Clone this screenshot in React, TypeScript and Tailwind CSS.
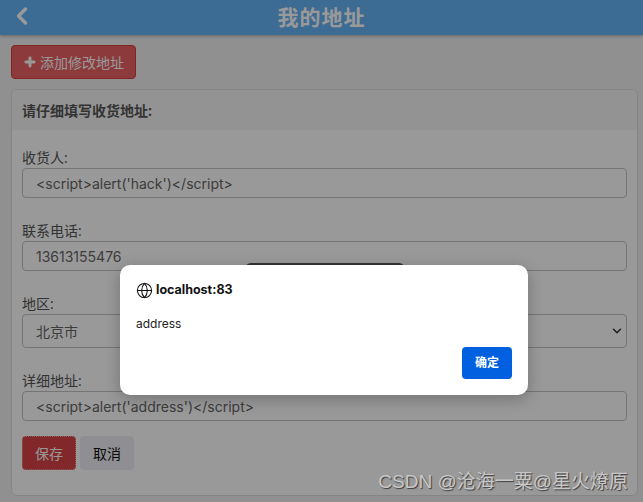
import React from 'react';
import { ChevronLeft, ChevronDown, Plus, Globe } from 'lucide-react';

const FONT = '"Open Sans", "Noto Sans CJK SC", sans-serif';

const Field = ({ label, value }: { label: string; value: string }) => (
    <div className="flex flex-col">
        <label className="text-[14px] leading-[20px] text-[#555]">{label}</label>
        <input
            readOnly
            value={value}
            className="h-[30px] rounded-[4px] border border-[#c4c4c4] bg-white px-[13px] font-['Inter'] text-[14px] text-[#666] outline-none"
        />
    </div>
);

const App = () => {
    return (
        <div className="relative h-[502px] w-[643px] overflow-hidden bg-[#f0f0f0]" style={{ fontFamily: FONT }}>
            <header className="relative flex h-[35px] items-center justify-center bg-[#65b2f5] shadow-[0_1px_3px_rgba(0,0,0,0.3)]">
                <ChevronLeft className="absolute left-[8px] top-[2px] h-[28px] w-[28px] text-white" strokeWidth={3} />
                <h1 className="text-[21px] font-bold tracking-[1px] text-white">我的地址</h1>
            </header>

            <div className="px-[11px] pt-[10px]">
                <button className="flex h-[34px] w-[125px] items-center justify-center gap-[3px] rounded-[4px] border border-[#d43f3a] bg-[#e96164] text-[14px] text-white">
                    <Plus className="h-[14px] w-[14px]" strokeWidth={5} />
                    添加修改地址
                </button>

                <section className="mt-[10px] h-[407px] w-[627px] rounded-[6px] border border-[#ddd] bg-white">
                    <div className="flex h-[40px] items-center rounded-t-[6px] bg-[#f5f5f5] px-[10px] text-[14px] font-bold text-[#555]">
                        请仔细填写收货地址:
                    </div>
                    <div className="flex flex-col px-[10px] pt-[18px]">
                        <Field label="收货人:" value="<script>alert('hack')</script>" />
                        <div className="mt-[23px]">
                            <Field label="联系电话:" value="13613155476" />
                        </div>
                        <div className="mt-[23px] flex flex-col">
                            <label className="text-[14px] leading-[20px] text-[#555]">地区:</label>
                            <div className="flex h-[34px] items-center justify-between rounded-[4px] border border-[#c4c4c4] bg-white pl-[13px] pr-[2px] text-[14px] text-[#666]">
                                <span>北京市</span>
                                <ChevronDown className="h-[14px] w-[14px] text-[#333]" strokeWidth={2.5} />
                            </div>
                        </div>
                        <div className="mt-[23px]">
                            <Field label="详细地址:" value="<script>alert('address')</script>" />
                        </div>
                        <div className="mt-[15px] flex gap-[4px]">
                            <button className="h-[34px] w-[54px] rounded-[4px] border border-dotted border-[#e8a0a0] bg-[#d94346] text-[14px] text-white">
                                保存
                            </button>
                            <button className="h-[34px] w-[54px] rounded-[4px] bg-[#efeff5] text-[14px] text-[#111]">
                                取消
                            </button>
                        </div>
                    </div>
                </section>
            </div>

            <div className="absolute left-[245px] top-[263px] h-[30px] w-[160px] rounded-[6px] bg-[#555]" />

            <div className="absolute inset-0 bg-black/40" />

            <div className="absolute left-[120px] top-[265px] flex h-[130px] w-[408px] flex-col rounded-[10px] bg-white px-[16px] pt-[16px] shadow-[0_4px_16px_rgba(0,0,0,0.25)]" style={{ fontFamily: '"Inter", "Noto Sans CJK SC", sans-serif' }}>
                <div className="flex items-center gap-[3px] text-[12.5px] font-bold text-[#111]">
                    <Globe className="h-[17px] w-[17px]" strokeWidth={1.5} />
                    localhost:83
                </div>
                <p className="mt-[15px] text-[12px] text-[#222]">address</p>
                <div className="mt-[14px] flex justify-end">
                    <button className="h-[32px] w-[50px] rounded-[4px] bg-[#0060df] text-[12px] font-bold text-white">
                        确定
                    </button>
                </div>
            </div>

            <div className="absolute right-[15px] top-[471px] font-['Liberation_Sans','Noto_Sans_CJK_SC',sans-serif] text-[19px] leading-[22px] text-[#c8c8c8] [text-shadow:1px_1px_1px_rgba(0,0,0,0.6)]">
                CSDN @沧海一粟@星火燎原
            </div>
        </div>
    );
};

export default App;
